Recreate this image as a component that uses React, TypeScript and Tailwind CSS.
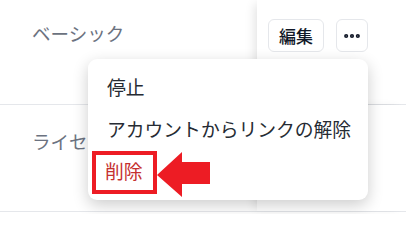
import { MoreHorizontal } from "lucide-react";

const rows = [{ name: "ベーシック" }, { name: "ライセンス" }];

const font = { fontFamily: '"Noto Sans CJK JP", "Noto Sans", sans-serif' };

export default function App() {
  return (
    <div className="relative h-[214px] w-[406px] overflow-hidden bg-white" style={font}>
      {/* ── テーブル行 ── */}
      <div className="flex flex-col">
        {rows.map((row, idx) => (
          <div
            key={row.name}
            className={`flex border-b border-[#e5e7eb] ${idx === 0 ? "h-[105px]" : "h-[107px]"}`}
          >
            <div className={`flex-1 pl-[32px] ${idx === 0 ? "pt-[19px]" : "pt-[22px]"}`}>
              <span className="text-[18.5px] leading-[28px] whitespace-nowrap text-[#6b7280]">
                {row.name}
              </span>
            </div>
            <div className="w-[149px] bg-white shadow-[-6px_0_10px_-4px_rgba(0,0,0,0.12)]">
              {idx === 0 && (
                <div className="flex items-center gap-[12px] pl-[11px] pt-[19px]">
                  <button className="h-[33px] w-[56px] rounded-md border border-[#e5e7eb] bg-white text-[17px] font-medium text-[#111827]">
                    編集
                  </button>
                  <button className="flex h-[33px] w-[32px] items-center justify-center rounded-md border border-[#e5e7eb] bg-white text-[#111827]">
                    <MoreHorizontal className="h-[20px] w-[20px]" strokeWidth={3} />
                  </button>
                </div>
              )}
            </div>
          </div>
        ))}
      </div>

      {/* ── ドロップダウンメニュー ── */}
      <div className="absolute left-[88px] top-[59px] w-[280px] rounded-[9px] bg-white py-[7px] shadow-[0_5px_16px_rgba(0,0,0,0.2)]">
        {["停止", "アカウントからリンクの解除"].map((label) => (
          <div key={label} className="flex h-[42px] items-center px-[19px] text-[18.8px] whitespace-nowrap text-[#262b33]">
            {label}
          </div>
        ))}
        <div className="flex h-[43px] items-center px-[17px] text-[18.8px] text-[#c53030]">削除</div>
      </div>

      {/* ── 注釈：赤枠と矢印 ── */}
      <div className="absolute left-[92px] top-[151px] h-[43px] w-[65px] border-[4px] border-[#ed1c24]" />
      <svg className="absolute left-[155px] top-[150px]" width="58" height="50" viewBox="0 0 58 50">
        <polygon points="2,25 27,2 27,12 55,12 55,34 27,34 27,47" fill="#ed1c24" />
      </svg>
    </div>
  );
}
